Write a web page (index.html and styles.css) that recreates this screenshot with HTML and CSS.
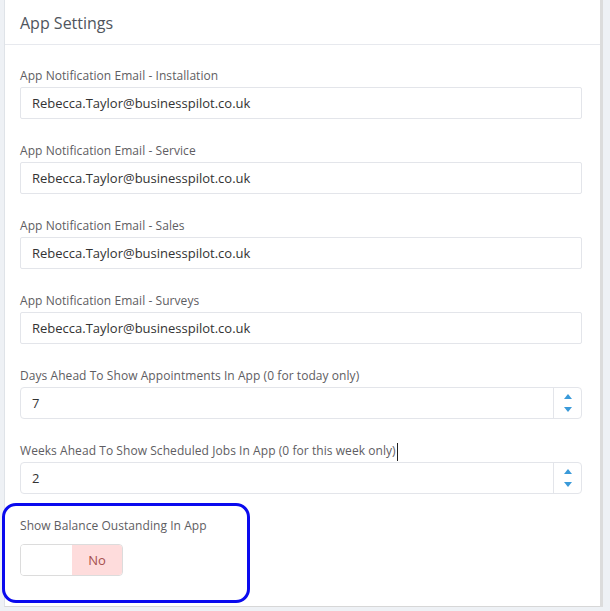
FILE: index.html
```html
<!DOCTYPE html>
<html>
<head>
<meta charset="utf-8">
<link rel="stylesheet" href="styles.css">
</head>
<body>
<div class="panel">
  <div class="panel-head">App Settings</div>
  <div class="panel-body">
    <div class="group">
      <label class="lbl">App Notification Email - Installation</label>
      <div class="input">Rebecca.Taylor@businesspilot.co.uk</div>
    </div>
    <div class="group">
      <label class="lbl">App Notification Email - Service</label>
      <div class="input">Rebecca.Taylor@businesspilot.co.uk</div>
    </div>
    <div class="group">
      <label class="lbl">App Notification Email - Sales</label>
      <div class="input">Rebecca.Taylor@businesspilot.co.uk</div>
    </div>
    <div class="group">
      <label class="lbl">App Notification Email - Surveys</label>
      <div class="input">Rebecca.Taylor@businesspilot.co.uk</div>
    </div>
    <div class="group">
      <label class="lbl">Days Ahead To Show Appointments In App (0 for today only)</label>
      <div class="input number">
        <span class="val">7</span>
        <span class="spin"><span class="up"></span><span class="down"></span></span>
      </div>
    </div>
    <div class="group">
      <label class="lbl">Weeks Ahead To Show Scheduled Jobs In App (0 for this week only)<span class="caret"></span></label>
      <div class="input number">
        <span class="val">2</span>
        <span class="spin"><span class="up"></span><span class="down"></span></span>
      </div>
    </div>
    <div class="group last">
      <label class="lbl">Show Balance Oustanding In App</label>
      <div class="toggle"><span class="off"></span><span class="no">No</span></div>
    </div>
  </div>
  <div class="highlight"></div>
</div>
</body>
</html>
```
FILE: styles.css
```css
html, body {
  margin: 0;
  padding: 0;
  background: #eef1f5;
  font-family: "Open Sans", "DejaVu Sans", sans-serif;
}
.panel {
  position: relative;
  margin-left: 4px;
  width: 596px;
  height: 607px;
  background: #fff;
  border-left: 1px solid #dfe3e8;
  border-bottom: 1px solid #d7d7d7;
  box-shadow: 3px 0 0 #dcdcdc;
  box-sizing: border-box;
}
.panel-head {
  height: 45px;
  box-sizing: border-box;
  border-bottom: 1px solid #e7e9ee;
  padding-left: 15px;
  font-size: 16px;
  line-height: 46px;
  color: #50555d;
}
.panel-body {
  padding: 21px 15px 0 15px;
}
.group {
  margin-bottom: 22px;
}
.lbl {
  display: block;
  font-size: 12px;
  letter-spacing: 0.06px;
  line-height: 20px;
  height: 20px;
  color: #5e5d62;
  margin-bottom: 1px;
  white-space: nowrap;
}
.last .lbl {
  margin-bottom: 8px;
}
.caret {
  display: inline-block;
  width: 1px;
  height: 18px;
  background: #222;
  vertical-align: middle;
  margin-left: 1px;
}
.input {
  box-sizing: border-box;
  width: 562px;
  height: 32px;
  border: 1px solid #e3e5ea;
  border-radius: 2px;
  padding-left: 11px;
  font-size: 13px;
  line-height: 30px;
  color: #333;
}
.input.number {
  display: flex;
  padding-left: 0;
  border-radius: 4px;
}
.input.number .val {
  flex: 1;
  padding-left: 11px;
}
.spin {
  width: 27px;
  border-left: 1px solid #e3e5ea;
  display: flex;
  flex-direction: column;
  align-items: center;
  justify-content: center;
  gap: 8px;
}
.up, .down {
  width: 0;
  height: 0;
  border-left: 4px solid transparent;
  border-right: 4px solid transparent;
}
.up { border-bottom: 5px solid #3a9ad9; }
.down { border-top: 5px solid #3a9ad9; }
.toggle {
  display: flex;
  width: 103px;
  height: 32px;
  box-sizing: border-box;
  border: 1px solid #dcdcdc;
  border-radius: 4px;
  overflow: hidden;
}
.toggle .off {
  width: 51px;
  background: #fff;
}
.toggle .no {
  flex: 1;
  background: #fedcdc;
  color: #a5504d;
  font-size: 13px;
  line-height: 30px;
  text-align: center;
}
.highlight {
  position: absolute;
  left: -3px;
  top: 503px;
  width: 248px;
  height: 100px;
  box-sizing: border-box;
  border: 3px solid #0a0aee;
  border-radius: 14px;
}
```
